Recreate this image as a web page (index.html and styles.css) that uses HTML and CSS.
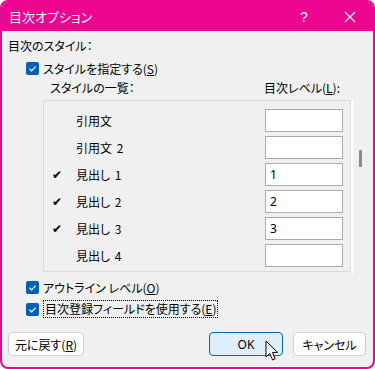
FILE: index.html
```html
<!DOCTYPE html>
<html lang="ja">
<head>
    <meta charset="UTF-8">
    <meta name="viewport" content="width=device-width, initial-scale=1.0">
    <title>目次オプション</title>
    <link rel="stylesheet" href="styles.css">
</head>

<body>
    <div class="window">
        <div class="titlebar">
            <span class="title">目次オプション</span>
            <span class="title-btn help">?</span>
            <span class="title-btn close">
                <svg width="12" height="12" viewBox="0 0 12 12"><path d="M1 1L11 11M11 1L1 11" stroke="#fff" stroke-width="1.1" fill="none"/></svg>
            </span>
        </div>

        <div class="content">
            <div class="group-label">目次のスタイル：</div>

            <label class="check-row first">
                <span class="box"><svg width="13" height="13" viewBox="0 0 13 13"><path d="M3.5 6.8L5.6 8.8L9.6 4.6" stroke="#fff" stroke-width="1.2" fill="none"/></svg></span>
                <span>スタイルを指定する(<u>S</u>)</span>
            </label>

            <div class="list-header">
                <span class="col-style">スタイルの一覧：</span>
                <span class="col-level">目次レベル(<u>L</u>):</span>
            </div>

            <div class="list-wrap">
                <div class="list">
                    <div class="row"><span class="mark"></span><span class="name">引用文</span><input class="level" type="text" value=""></div>
                    <div class="row"><span class="mark"></span><span class="name">引用文&nbsp;2</span><input class="level" type="text" value=""></div>
                    <div class="row"><span class="mark">✔</span><span class="name">見出し&nbsp;1</span><input class="level" type="text" value="1"></div>
                    <div class="row"><span class="mark">✔</span><span class="name">見出し&nbsp;2</span><input class="level" type="text" value="2"></div>
                    <div class="row"><span class="mark">✔</span><span class="name">見出し&nbsp;3</span><input class="level" type="text" value="3"></div>
                    <div class="row"><span class="mark"></span><span class="name">見出し&nbsp;4</span><input class="level" type="text" value=""></div>
                </div>
                <div class="scrollbar"><div class="thumb"></div></div>
            </div>

            <label class="check-row outline">
                <span class="box"><svg width="13" height="13" viewBox="0 0 13 13"><path d="M3.5 6.8L5.6 8.8L9.6 4.6" stroke="#fff" stroke-width="1.2" fill="none"/></svg></span>
                <span>アウトライン レベル(<u>O</u>)</span>
            </label>

            <label class="check-row fields">
                <span class="box"><svg width="13" height="13" viewBox="0 0 13 13"><path d="M3.5 6.8L5.6 8.8L9.6 4.6" stroke="#fff" stroke-width="1.2" fill="none"/></svg></span>
                <span class="focus">目次登録フィールドを使用する(<u>E</u>)</span>
            </label>

            <div class="buttons">
                <button class="btn reset">元に戻す(<u>R</u>)</button>
                <button class="btn ok">OK</button>
                <button class="btn cancel">キャンセル</button>
            </div>
        </div>

        <svg class="cursor" width="14" height="22" viewBox="0 0 14 22">
            <path d="M1 1L1 17L4.8 13.4L7.6 20L10.2 18.9L7.5 12.4L12.6 12.4Z" fill="#fff" stroke="#000" stroke-width="1" stroke-linejoin="round"/>
        </svg>
    </div>
</body>
</html>
```

FILE: styles.css
```css
/* Reset */
* {
    margin: 0;
    padding: 0;
    box-sizing: border-box;
}

body {
    font-family: "Noto Sans CJK JP", "Noto Sans", sans-serif;
    font-feature-settings: "palt";
    font-size: 12px;
    color: #000;
    background-color: #fff;
}

/* Window frame */
.window {
    position: relative;
    width: 375px;
    height: 369px;
    background-color: #f0f0f0;
    border: 2px solid #ec068f;
    border-radius: 8px;
    overflow: hidden;
}

.titlebar {
    display: flex;
    align-items: center;
    height: 29px;
    background-color: #ec068f;
    color: #fff;
    padding-left: 7px;
}

.title {
    flex: 1;
    font-size: 13px;
}

.title-btn {
    display: flex;
    align-items: center;
    justify-content: center;
    width: 46px;
    height: 29px;
    font-family: "Liberation Sans", sans-serif;
    font-size: 14px;
}

/* Dialog body */
.content {
    padding: 7px 0 0 6px;
}

.group-label {
    height: 16px;
    line-height: 16px;
}

.check-row {
    display: flex;
    align-items: center;
    height: 16px;
    margin-left: 18px;
    gap: 4px;
}

.check-row.first {
    margin-top: 6px;
}

.box {
    display: block;
    width: 13px;
    height: 13px;
    background-color: #005fb8;
    border-radius: 2px;
}

.box svg {
    display: block;
}

.list-header {
    display: flex;
    height: 16px;
    line-height: 16px;
    margin-top: 4px;
}

.col-style {
    margin-left: 42px;
    width: 214px;
}

/* Style list */
.list-wrap {
    display: flex;
    margin-top: 4px;
    margin-left: 35px;
}

.list {
    width: 308px;
    height: 172px;
    border: 1px solid #d9d9d9;
    box-shadow: 2px 0 0 -1px #fff;
    padding-top: 6px;
}

.row {
    display: flex;
    align-items: center;
    height: 27px;
}

.mark {
    width: 32px;
    padding-left: 8px;
    font-family: "DejaVu Sans", sans-serif;
    font-size: 12px;
}

.name {
    flex: 1;
    word-spacing: 2px;
}

.level {
    width: 78px;
    height: 23px;
    margin-right: 7px;
    border: 1px solid #ababab;
    background-color: #fff;
    font-family: "Noto Sans", sans-serif;
    font-size: 12px;
    padding: 0 4px;
    color: #000;
}

.scrollbar {
    width: 20px;
    border-left: 1px solid #fff;
    margin-left: 1px;
    height: 174px;
    padding-top: 50px;
}

.thumb {
    width: 3px;
    height: 17px;
    margin-left: 6px;
    background-color: #8a8a8a;
    border-radius: 1px;
}

.check-row.outline {
    margin-top: 5px;
}

.check-row.fields {
    margin-top: 5px;
    height: 18px;
}

.focus {
    border: 1px dotted #000;
    padding: 0 1px;
    line-height: 16px;
}

/* Buttons */
.buttons {
    display: flex;
    margin-top: 14px;
}

.btn {
    height: 24px;
    font-family: "Noto Sans CJK JP", sans-serif;
    font-feature-settings: "palt";
    font-size: 12px;
    background-color: #fdfdfd;
    border: 1px solid #d0d0d0;
    border-radius: 4px;
    color: #000;
    flex-shrink: 0;
}

.reset {
    width: 76px;
}

.ok {
    width: 74px;
    margin-left: 125px;
    background-color: #e0eef9;
    border: 1px solid #0067c0;
    font-family: "Noto Sans", sans-serif;
}

.cancel {
    width: 73px;
    margin-left: 10px;
}

/* Mouse pointer over the OK button */
.cursor {
    position: absolute;
    left: 263px;
    top: 338px;
}
```
